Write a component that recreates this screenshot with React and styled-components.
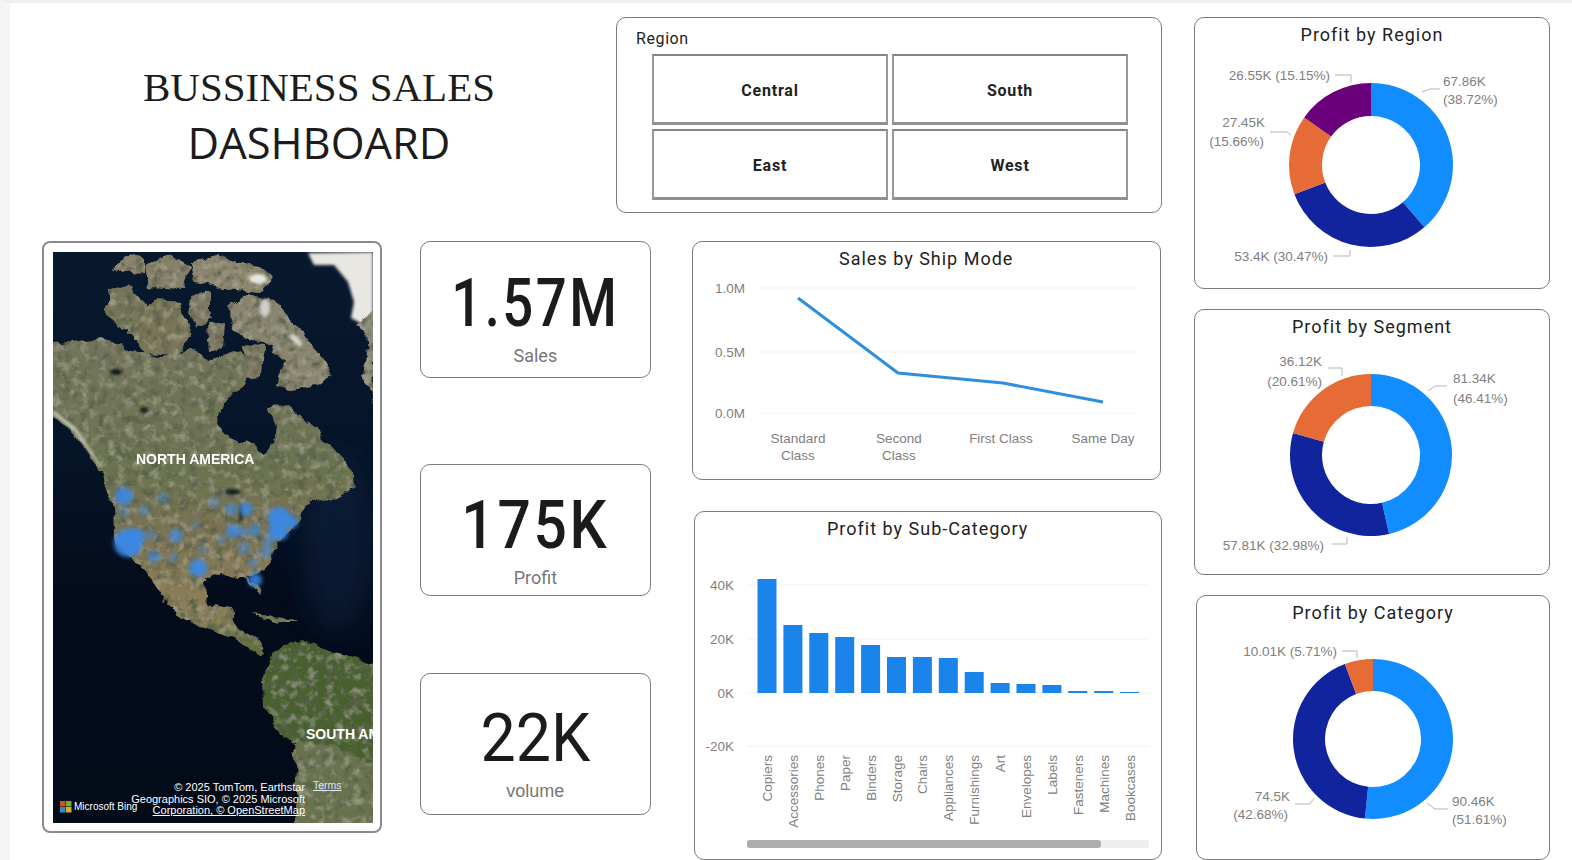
import React from 'react';
import styled, { createGlobalStyle } from 'styled-components';

const GlobalStyle = createGlobalStyle`
  html, body {
    margin: 0;
    padding: 0;
    background: #fff;
    overflow: hidden;
  }
  * { box-sizing: border-box; }
`;

// Power BI default theme colours
const BLUE = '#118dff';
const NAVY = '#12239e';
const ORANGE = '#e66c37';
const PURPLE = '#6b007b';

const regionData = {
  title: 'Profit by Region',
  center: [1371, 165],
  radius: [82, 49],
  slices: [
    { pct: 38.72, color: BLUE },
    { pct: 30.47, color: NAVY },
    { pct: 15.66, color: ORANGE },
    { pct: 15.15, color: PURPLE },
  ],
  labels: [
    { x: 1330, y: 80, anchor: 'end', text: '26.55K (15.15%)' },
    { x: 1443, y: 86, text: '67.86K' },
    { x: 1443, y: 104, text: '(38.72%)' },
    { x: 1265, y: 127, anchor: 'end', text: '27.45K' },
    { x: 1264, y: 146, anchor: 'end', text: '(15.66%)' },
    { x: 1328, y: 261, anchor: 'end', text: '53.4K (30.47%)' },
  ],
  leaders: [
    '1335,75 1351,75 1351,82',
    '1422,92 1430,89 1440,89',
    '1270,132 1287,132 1291,135',
    '1333,256 1350,256 1350,250',
  ],
};

const segmentData = {
  title: 'Profit by Segment',
  center: [1371, 455],
  radius: [81, 49],
  slices: [
    { pct: 46.41, color: BLUE },
    { pct: 32.98, color: NAVY },
    { pct: 20.61, color: ORANGE },
  ],
  labels: [
    { x: 1322, y: 366, anchor: 'end', text: '36.12K' },
    { x: 1322, y: 386, anchor: 'end', text: '(20.61%)' },
    { x: 1453, y: 383, text: '81.34K' },
    { x: 1453, y: 403, text: '(46.41%)' },
    { x: 1324, y: 550, anchor: 'end', text: '57.81K (32.98%)' },
  ],
  leaders: [
    '1328,368 1342,368 1342,376',
    '1428,391 1435,386 1447,386',
    '1332,544 1347,544 1347,537',
  ],
};

const categoryData = {
  title: 'Profit by Category',
  center: [1373, 739],
  radius: [80, 48],
  slices: [
    { pct: 51.61, color: BLUE },
    { pct: 42.68, color: NAVY },
    { pct: 5.71, color: ORANGE },
  ],
  labels: [
    { x: 1337, y: 656, anchor: 'end', text: '10.01K (5.71%)' },
    { x: 1290, y: 801, anchor: 'end', text: '74.5K' },
    { x: 1288, y: 819, anchor: 'end', text: '(42.68%)' },
    { x: 1452, y: 806, text: '90.46K' },
    { x: 1452, y: 824, text: '(51.61%)' },
  ],
  leaders: [
    '1342,651 1357,651 1357,658',
    '1295,804 1310,804 1314,798',
    '1427,803 1435,809 1448,809',
  ],
};

const subCategories = [
  ['Copiers', 579], ['Accessories', 625], ['Phones', 633], ['Paper', 637], ['Binders', 645],
  ['Storage', 657], ['Chairs', 657], ['Appliances', 658], ['Furnishings', 672], ['Art', 683],
  ['Envelopes', 684], ['Labels', 685], ['Fasteners', 691], ['Machines', 691], ['Bookcases', 692],
];

const mapDots = [
  [71, 244, 9, 0.9], [71, 260, 5, 0.4], [91, 258, 6, 0.4], [110, 246, 6, 0.4], [75, 291, 14, 0.95],
  [83, 285, 9, 0.85], [98, 283, 6, 0.4], [123, 284, 7, 0.7], [101, 305, 6, 0.65], [120, 305, 5, 0.4],
  [145, 316, 9, 0.9], [150, 298, 5, 0.35], [161, 250, 6, 0.35], [178, 257, 6, 0.6], [193, 257, 7, 0.8],
  [180, 279, 7, 0.8], [191, 280, 5, 0.6], [202, 278, 6, 0.7], [226, 266, 11, 0.95], [238, 270, 7, 0.9],
  [223, 280, 8, 0.9], [228, 281, 7, 0.9], [215, 290, 5, 0.6], [213, 300, 6, 0.6], [191, 296, 6, 0.55],
  [168, 288, 4, 0.45], [200, 311, 5, 0.5], [202, 328, 7, 0.85], [143, 273, 5, 0.3],
];

function arcPath(cx, cy, outer, inner, from, to) {
  const pt = (r, a) => {
    const rad = (a / 100) * 2 * Math.PI - Math.PI / 2;
    return `${(cx + r * Math.cos(rad)).toFixed(2)} ${(cy + r * Math.sin(rad)).toFixed(2)}`;
  };
  const large = to - from > 50 ? 1 : 0;
  return `M${pt(outer, from)} A${outer} ${outer} 0 ${large} 1 ${pt(outer, to)} L${pt(inner, to)} A${inner} ${inner} 0 ${large} 0 ${pt(inner, from)} Z`;
}

function DonutCard({ data, left, top, width, height, shift }) {
  // viewBox is in page coordinates so the labels can be read straight off the reference
  const svgH = height - 36;
  const svgW = width - 2;
  let start = 0;
  return (
    <DonutBox $shift={shift}>
      <ChartTitle>{data.title}</ChartTitle>
      <svg width={svgW} height={svgH} viewBox={`${left + 1} ${top + 35} ${svgW} ${svgH}`}>
        {data.slices.map((s) => {
          const d = arcPath(data.center[0], data.center[1], data.radius[0], data.radius[1], start, start + s.pct);
          start += s.pct;
          return <path key={s.color} d={d} fill={s.color} />;
        })}
        {data.leaders.map((p) => (
          <Leader key={p} points={p} />
        ))}
        {data.labels.map((l) => (
          <AxisText key={l.text} x={l.x} y={l.y} textAnchor={l.anchor || 'start'}>
            {l.text}
          </AxisText>
        ))}
      </svg>
    </DonutBox>
  );
}

function MapVisual() {
  return (
    <MapFrame>
      <svg width="320" height="571" viewBox="0 0 320 571">
        <defs>
          <linearGradient id="ocean" x1="0" y1="0" x2="0" y2="1">
            <stop offset="0" stopColor="#08192e" />
            <stop offset="0.35" stopColor="#061428" />
            <stop offset="0.6" stopColor="#040c1c" />
            <stop offset="1" stopColor="#030a18" />
          </linearGradient>
          <linearGradient id="land" x1="0" y1="0" x2="0" y2="1">
            <stop offset="0" stopColor="#74755c" />
            <stop offset="0.42" stopColor="#6b7350" />
            <stop offset="0.6" stopColor="#7c7352" />
            <stop offset="0.85" stopColor="#8c7e58" />
            <stop offset="1" stopColor="#5c6c3c" />
          </linearGradient>
          <filter id="terrain" x="-5%" y="-5%" width="110%" height="110%">
            <feTurbulence type="fractalNoise" baseFrequency="0.06" numOctaves="4" seed="11" result="warp" />
            <feDisplacementMap in="SourceGraphic" in2="warp" scale="11" xChannelSelector="R" yChannelSelector="G" result="shape" />
            <feTurbulence type="fractalNoise" baseFrequency="0.11" numOctaves="5" seed="4" result="grain" />
            <feColorMatrix in="grain" values="0 0 0 0 0.1  0 0 0 0 0.12  0 0 0 0 0.07  3 0 0 0 -1.4" result="darkGrain" />
            <feComposite in="darkGrain" in2="shape" operator="in" result="dark" />
            <feColorMatrix in="grain" values="0 0 0 0 0.55  0 0 0 0 0.54  0 0 0 0 0.42  0 1.1 0 0 -0.55" result="lightGrain" />
            <feComposite in="lightGrain" in2="shape" operator="in" result="light" />
            <feMerge result="merged">
              <feMergeNode in="shape" />
              <feMergeNode in="dark" />
              <feMergeNode in="light" />
            </feMerge>
            <feGaussianBlur in="merged" stdDeviation="0.7" />
          </filter>
          <filter id="soft">
            <feGaussianBlur stdDeviation="1.6" />
          </filter>
          <filter id="blob" x="-20%" y="-20%" width="140%" height="140%">
            <feGaussianBlur stdDeviation="2.2" />
          </filter>
          <filter id="haze" x="-100%" y="-100%" width="300%" height="300%">
            <feGaussianBlur stdDeviation="14" />
          </filter>
        </defs>

        <rect width="320" height="571" fill="url(#ocean)" />
        <ellipse cx="285" cy="290" rx="36" ry="90" fill="#0a2440" opacity="0.6" filter="url(#haze)" />

        {/* ice top right */}
        <polygon points="255,1 261,13 281,13 295,30 301,50 298,66 311,73 320,83 320,0" fill="#e9e7e1" filter="url(#soft)" />

        <g filter="url(#terrain)" fill="#7d7862">
          <polygon points="303,73 313,80 315,103 311,123 320,153 322,60" fill="#8c8a78" />
          <polygon points="62,16 78,2 92,6 92,20 70,22" fill="#8b846c" />
          <polygon points="92,14 118,4 138,14 130,36 96,34" fill="#86806a" />
          <polygon points="138,10 165,3 208,16 220,26 208,40 172,37 142,30" fill="#8e8670" />
          <polygon points="54,40 76,34 92,52 90,72 68,78 54,62" fill="#75765a" />
          <polygon points="80,62 104,48 128,50 138,88 124,104 92,102 76,82" fill="#7a7658" />
          <polygon points="136,46 158,40 158,68 142,76" />
          <polygon points="154,72 172,70 170,96 156,100" />
          <polygon points="176,56 195,41 220,48 248,78 280,122 264,134 240,138 222,134 232,106 212,94 198,86 180,78" fill="#898571" />
          <polygon points="192,92 210,94 208,126 190,128" />
          <polygon points="-4,92 21,90 48,86 78,98 108,106 135,98 158,108 188,98 195,116 191,136 175,146 163,166 170,180 195,191 210,200 220,190 223,173 216,156 235,153 265,180 293,210 303,236 285,246 255,250 245,270 225,290 226,295 211,318 195,325 208,338 205,345 195,328 165,321 151,331 153,351 178,355 181,368 185,375 201,385 211,401 205,403 178,385 151,375 128,366 111,345 93,318 78,305 65,291 61,283 60,250 45,213 21,180 -4,163" fill="url(#land)" />
          <polygon points="218,403 231,391 255,388 278,400 311,408 324,415 324,575 238,575 245,551 251,501 231,485 211,455 210,431" fill="#46602f" />
          <polygon points="240,490 285,495 324,520 324,575 238,575 245,551" fill="#6a7350" />
          <polygon points="200,361 222,364 245,371 232,371 206,365" fill="#6f7a56" />
          <polygon points="96,322 100,322 114,348 110,350" fill="#8c7e58" />
        </g>

        {/* snow and lakes */}
        <g filter="url(#soft)">
          <ellipse cx="205" cy="27" rx="9" ry="5" fill="#e6e6e0" />
          <ellipse cx="212" cy="56" rx="5" ry="9" fill="#cfcfc6" />
          <ellipse cx="243" cy="88" rx="8" ry="3" fill="#d9d9d0" transform="rotate(45 243 88)" />
          <polygon points="0,162 21,179 45,212 47,212 23,176 0,158" fill="#c9cabd" />
          <ellipse cx="63" cy="120" rx="6" ry="3" fill="#10151a" />
          <ellipse cx="91" cy="158" rx="4" ry="3" fill="#131a1a" />
          <ellipse cx="180" cy="240" rx="8" ry="2.5" fill="#0e1518" />
          <ellipse cx="188" cy="262" rx="1.5" ry="8" fill="#0e1518" />
        </g>

        <g fill="#3a88e6" filter="url(#blob)">
          {mapDots.map(([x, y, r, o]) => (
            <circle key={`${x}-${y}`} cx={x} cy={y} r={r} opacity={o} />
          ))}
        </g>

        {/* Bing logo squares */}
        <rect x="7" y="549" width="5.5" height="5.5" fill="#c9582c" />
        <rect x="13" y="549" width="5.5" height="5.5" fill="#7fa82c" />
        <rect x="7" y="555" width="5.5" height="5.5" fill="#2c8fc9" />
        <rect x="13" y="555" width="5.5" height="5.5" fill="#d9ae2c" />
      </svg>
      <ContinentLabel $x={83} $y={199}>NORTH AMERICA</ContinentLabel>
      <ContinentLabel $x={253} $y={474}>SOUTH AMERICA</ContinentLabel>
      <BingText>Microsoft Bing</BingText>
      <Attribution>
        <div>© 2025 TomTom, Earthstar</div>
        <div>Geographics SIO, © 2025 Microsoft</div>
        <div><u>Corporation, © OpenStreetMap</u></div>
      </Attribution>
      <TermsLink>Terms</TermsLink>
    </MapFrame>
  );
}

export default function App() {
  return (
    <Page>
      <GlobalStyle />
      <Main>
        <TopRow>
          <Heading>
            <HeadingSerif>BUSSINESS SALES</HeadingSerif>
            <HeadingSans>DASHBOARD</HeadingSans>
          </Heading>
          <SlicerCard>
            <SlicerLabel>Region</SlicerLabel>
            <SlicerGrid>
              {['Central', 'South', 'East', 'West'].map((r) => (
                <SlicerTile key={r}>{r}</SlicerTile>
              ))}
            </SlicerGrid>
          </SlicerCard>
        </TopRow>

        <BottomRow>
          <MapCard>
            <MapVisual />
          </MapCard>

          <KpiColumn>
            <KpiCard $h={137} $top={29}>
              <KpiValue $scale={0.825}>1.57M</KpiValue>
              <KpiLabel>Sales</KpiLabel>
            </KpiCard>
            <KpiCard $h={132} $top={28} $gap={86}>
              <KpiValue $scale={0.89}>175K</KpiValue>
              <KpiLabel>Profit</KpiLabel>
            </KpiCard>
            <KpiCard $h={142} $top={32} $gap={77}>
              <KpiValue $plain $scale={0.95}>22K</KpiValue>
              <KpiLabel $plain>volume</KpiLabel>
            </KpiCard>
          </KpiColumn>

          <ChartColumn>
            <LineCard>
              <ChartTitle>Sales by Ship Mode</ChartTitle>
              <svg width="467" height="203" viewBox="693 276 467 203">
                {[288, 352, 413].map((y) => (
                  <GridLine key={y} x1="760" x2="1137" y1={y} y2={y} />
                ))}
                <AxisText x="745" y="293" textAnchor="end">1.0M</AxisText>
                <AxisText x="745" y="357" textAnchor="end">0.5M</AxisText>
                <AxisText x="745" y="418" textAnchor="end">0.0M</AxisText>
                <polyline
                  points="798,298 898,373 1003,383 1103,402"
                  fill="none"
                  stroke="#2f8fdc"
                  strokeWidth="3"
                  strokeLinejoin="round"
                />
                <AxisText x="798" y="443" textAnchor="middle">Standard</AxisText>
                <AxisText x="798" y="460" textAnchor="middle">Class</AxisText>
                <AxisText x="899" y="443" textAnchor="middle">Second</AxisText>
                <AxisText x="899" y="460" textAnchor="middle">Class</AxisText>
                <AxisText x="1001" y="443" textAnchor="middle">First Class</AxisText>
                <AxisText x="1103" y="443" textAnchor="middle">Same Day</AxisText>
              </svg>
            </LineCard>

            <BarCard>
              <ChartTitle>Profit by Sub-Category</ChartTitle>
              <svg width="466" height="289" viewBox="695 546 466 289">
                {[585, 639, 693, 746].map((y) => (
                  <GridLine key={y} x1="747" x2="1150" y1={y} y2={y} />
                ))}
                <AxisText x="734" y="590" textAnchor="end">40K</AxisText>
                <AxisText x="734" y="644" textAnchor="end">20K</AxisText>
                <AxisText x="734" y="698" textAnchor="end">0K</AxisText>
                <AxisText x="734" y="751" textAnchor="end">-20K</AxisText>
                {subCategories.map(([name, top], i) => {
                  const cx = 767 + i * 25.9;
                  return (
                    <g key={name}>
                      <rect x={cx - 9.5} y={top} width="19" height={693 - top} fill="#1a84ea" />
                      <AxisText x={cx + 5} y="755" textAnchor="end" transform={`rotate(-90 ${cx + 5} 755)`}>
                        {name}
                      </AxisText>
                    </g>
                  );
                })}
              </svg>
              <ScrollTrack>
                <ScrollThumb />
              </ScrollTrack>
            </BarCard>
          </ChartColumn>
        </BottomRow>
      </Main>

      <SideColumn>
        <DonutCard data={regionData} left={1194} top={17} width={356} height={272} />
        <DonutCard data={segmentData} left={1194} top={309} width={356} height={266} />
        <DonutCard data={categoryData} left={1196} top={595} width={354} height={265} shift />
      </SideColumn>
    </Page>
  );
}

const Page = styled.div`
  display: flex;
  gap: 32px;
  width: 1572px;
  height: 860px;
  padding: 14px 0 0 32px;
  background: #fff;
  border-left: 10px solid #f5f5f5;
  border-top: 3px solid #efefef;
  overflow: hidden;
  font-family: Roboto, 'Liberation Sans', sans-serif;
`;

const Main = styled.div`
  display: flex;
  flex-direction: column;
  width: 1120px;
`;

const TopRow = styled.div`
  display: flex;
  height: 196px;
`;

const Heading = styled.div`
  width: 574px;
  padding-right: 20px;
  display: flex;
  flex-direction: column;
  align-items: center;
  justify-content: center;
  color: #1c1c1c;
`;

const HeadingSerif = styled.div`
  font-family: 'Liberation Serif', serif;
  font-size: 41px;
  line-height: 56px;
  white-space: nowrap;
`;

const HeadingSans = styled.div`
  font-family: 'Open Sans', sans-serif;
  font-size: 43.5px;
  line-height: 56px;
  white-space: nowrap;
`;

const Card = styled.div`
  background: #fff;
  border: 1px solid #7c7c7c;
  border-radius: 10px;
`;

const SlicerCard = styled(Card)`
  width: 546px;
  padding: 9px 0 0 19px;
`;

const SlicerLabel = styled.div`
  font-size: 16px;
  line-height: 24px;
  color: #222;
  letter-spacing: 0.6px;
`;

const SlicerGrid = styled.div`
  display: grid;
  grid-template-columns: 236px 236px;
  grid-auto-rows: 71px;
  gap: 4px;
  margin: 3px 0 0 16px;
`;

const SlicerTile = styled.div`
  display: flex;
  align-items: center;
  justify-content: center;
  padding-top: 2px;
  border: 2px solid #999;
  border-top-color: #858585;
  border-bottom: 3px solid #8f8f8f;
  font-size: 16px;
  font-weight: 700;
  color: #222;
  letter-spacing: 0.8px;
`;

const BottomRow = styled.div`
  display: flex;
  margin-top: 28px;
  height: 619px;
`;

const MapCard = styled(Card)`
  width: 340px;
  height: 592px;
  padding: 9px;
  border: 2px solid #8a8a8a;
  border-radius: 8px;
`;

const MapFrame = styled.div`
  position: relative;
  width: 320px;
  height: 571px;
  overflow: hidden;

  svg {
    display: block;
  }
`;

const ContinentLabel = styled.div`
  position: absolute;
  left: ${(p) => p.$x}px;
  top: ${(p) => p.$y}px;
  font-family: 'Liberation Sans', sans-serif;
  font-size: 14px;
  line-height: 16px;
  font-weight: 700;
  color: #fff;
  white-space: nowrap;
`;

const BingText = styled.div`
  position: absolute;
  left: 21px;
  top: 549px;
  font-family: 'Liberation Sans', sans-serif;
  font-size: 10px;
  line-height: 12px;
  color: #fff;
  white-space: nowrap;
`;

const Attribution = styled.div`
  position: absolute;
  right: 68px;
  top: 530px;
  font-family: 'Liberation Sans', sans-serif;
  font-size: 11px;
  line-height: 11.5px;
  color: #fff;
  text-align: right;
  white-space: nowrap;
`;

const TermsLink = styled.u`
  position: absolute;
  left: 260px;
  top: 527px;
  font-family: 'Liberation Sans', sans-serif;
  font-size: 10.5px;
  color: #dfe6f5;
`;

const KpiColumn = styled.div`
  display: flex;
  flex-direction: column;
  width: 231px;
  margin: 0 41px 0 38px;
`;

const KpiCard = styled(Card)`
  height: ${(p) => p.$h}px;
  margin-top: ${(p) => p.$gap || 0}px;
  padding-top: ${(p) => p.$top}px;
  text-align: center;
  overflow: hidden;
`;

const KpiValue = styled.div`
  font-size: 66px;
  line-height: 66px;
  font-weight: ${(p) => (p.$plain ? 400 : 500)};
  color: #1b1b1b;
  letter-spacing: ${(p) => (p.$plain ? '0' : '3px')};
  transform: scaleX(${(p) => p.$scale});
  white-space: nowrap;
`;

const KpiLabel = styled.div`
  margin-top: 9px;
  font-family: ${(p) => (p.$plain ? "'Liberation Sans', sans-serif" : 'Roboto, sans-serif')};
  font-size: 18px;
  line-height: 20px;
  color: #777;
`;

const ChartColumn = styled.div`
  display: flex;
  flex-direction: column;
  gap: 31px;
  width: 471px;
`;

const ChartTitle = styled.div`
  height: 34px;
  line-height: 34px;
  text-align: center;
  font-size: 18px;
  letter-spacing: 1px;
  color: #222;
  white-space: nowrap;
`;

const LineCard = styled(Card)`
  width: 469px;
  height: 239px;

  svg {
    display: block;
  }
`;

const BarCard = styled(Card)`
  width: 468px;
  height: 349px;
  margin-left: 2px;

  svg {
    display: block;
  }
`;

const ScrollTrack = styled.div`
  width: 402px;
  height: 8px;
  margin: 5px 0 0 52px;
  background: #eeeeee;
`;

const ScrollThumb = styled.div`
  width: 354px;
  height: 100%;
  background: #adadad;
  border-radius: 3px;
`;

const SideColumn = styled.div`
  display: grid;
  grid-template-rows: 272px 266px 265px;
  gap: 20px;
  width: 356px;
`;

const DonutBox = styled(Card)`
  margin-left: ${(p) => (p.$shift ? '2px' : '0')};

  svg {
    display: block;
  }
`;

const AxisText = styled.text`
  font-family: 'Liberation Sans', sans-serif;
  font-size: 13.5px;
  fill: #808080;
`;

const GridLine = styled.line`
  stroke: #f1f1f1;
  stroke-width: 1;
`;

const Leader = styled.polyline`
  fill: none;
  stroke: #b5b5b5;
  stroke-width: 1;
`;
